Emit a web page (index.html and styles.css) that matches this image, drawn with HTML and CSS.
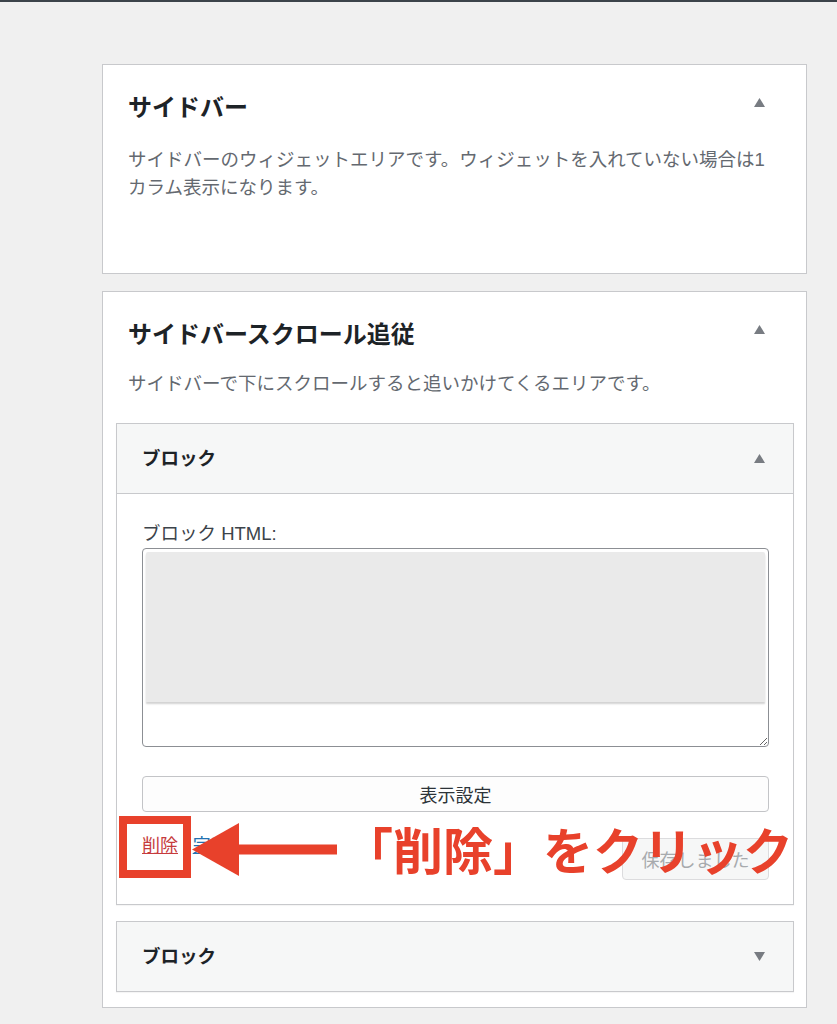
FILE: index.html
```html
<!DOCTYPE html>
<html lang="ja">
<head>
<meta charset="utf-8">
<title>ウィジェット</title>
<link rel="stylesheet" href="styles.css">
</head>
<body>
<div class="topbar"></div>
<main class="area">
  <section class="sidebar-box box-first">
    <div class="box-head">
      <h2 class="box-title">サイドバー</h2>
      <svg class="toggle" width="11" height="9" viewBox="0 0 11 9"><path d="M5.5 0 L11 9 L0 9 Z"/></svg>
    </div>
    <p class="desc desc-first">サイドバーのウィジェットエリアです。ウィジェットを入れていない場合は1<br>カラム表示になります。</p>
    <div class="dropzone"></div>
  </section>

  <section class="sidebar-box box-second">
    <div class="box-head">
      <h2 class="box-title">サイドバースクロール追従</h2>
      <svg class="toggle" width="11" height="9" viewBox="0 0 11 9"><path d="M5.5 0 L11 9 L0 9 Z"/></svg>
    </div>
    <p class="desc desc-second">サイドバーで下にスクロールすると追いかけてくるエリアです。</p>

    <div class="widget widget-open">
      <div class="widget-top">
        <h3 class="widget-title">ブロック</h3>
        <svg class="toggle-sm" width="11" height="9" viewBox="0 0 11 9"><path d="M5.5 0 L11 9 L0 9 Z"/></svg>
      </div>
      <div class="widget-inside">
        <label class="field-label">ブロック HTML:</label>
        <div class="field">
          <textarea class="code"></textarea>
          <div class="preview"></div>
        </div>
        <button class="display-btn" type="button">表示設定</button>
        <div class="actions">
          <span class="links"><a class="remove" href="#">削除</a> <span class="sep">|</span> <a class="done" href="#">完了</a></span>
          <button class="saved" type="button" disabled>保存しました</button>
          <div class="annotation">
            <div class="mark-box"></div>
            <svg class="arrow" width="145" height="54" viewBox="0 0 145 54"><path d="M0 26.5 L47 0 L47 53 Z"/><rect x="45" y="21.5" width="100" height="10"/></svg>
            <span class="note">「削除」をクリック</span>
          </div>
        </div>
      </div>
    </div>

    <div class="widget widget-closed">
      <div class="widget-top">
        <h3 class="widget-title">ブロック</h3>
        <svg class="toggle-sm" width="11" height="9" viewBox="0 0 11 9"><path d="M0 0 L11 0 L5.5 9 Z"/></svg>
      </div>
    </div>
  </section>
</main>
</body>
</html>
```

FILE: styles.css
```css
html, body {
  margin: 0;
  padding: 0;
}
body {
  background: #f0f0f0;
  font-family: "Liberation Sans", "Noto Sans CJK JP", sans-serif;
  color: #1d2327;
}
.topbar {
  height: 2px;
  background: #3c434a;
}
.area {
  margin-top: 62px;
  padding-left: 102px;
  width: 705px;
}
.sidebar-box {
  box-sizing: border-box;
  width: 705px;
  background: #fff;
  border: 1px solid #c8c9cc;
  padding: 28px 12px 0 13px;
}
.box-second {
  margin-top: 17px;
  padding-bottom: 15px;
}
.box-head {
  display: flex;
  justify-content: space-between;
  align-items: flex-start;
  padding: 0 29px 0 12px;
}
.box-title {
  margin: 0;
  font-size: 24px;
  line-height: 30px;
  font-weight: 700;
  color: #1d2327;
}
.toggle, .toggle-sm {
  fill: #787c82;
  display: block;
}
.toggle {
  margin-top: 5px;
}
.desc {
  margin: 0;
  padding: 0 12px;
  font-size: 18.5px;
  line-height: 28px;
  color: #646970;
}
.desc-first {
  margin-top: 23px;
}
.desc-second {
  margin-top: 20px;
}
.dropzone {
  height: 71px;
}
.widget {
  border: 1px solid #c8c9cc;
  background: #fff;
  box-shadow: 0 1px 1px rgba(0, 0, 0, 0.04);
}
.widget-open {
  margin-top: 25px;
}
.widget-closed {
  margin-top: 16px;
}
.widget-top {
  display: flex;
  justify-content: space-between;
  align-items: center;
  height: 69px;
  padding: 0 28px 0 25px;
  background: #f6f7f7;
}
.widget-open .widget-top {
  border-bottom: 1px solid #c8c9cc;
}
.widget-title {
  margin: 0;
  font-size: 18.5px;
  line-height: 24px;
  font-weight: 700;
  color: #1d2327;
}
.widget-inside {
  padding: 28px 24px 24px 25px;
}
.field-label {
  display: block;
  font-size: 18.5px;
  line-height: 24px;
  color: #3c434a;
}
.field {
  position: relative;
  margin-top: 2px;
}
.code {
  display: block;
  box-sizing: border-box;
  width: 627px;
  height: 199px;
  margin: 0;
  border: 1px solid #8c8f94;
  border-radius: 4px;
  background: #fff;
}
.preview {
  position: absolute;
  left: 4px;
  right: 4px;
  top: 4px;
  height: 150px;
  background: #eaeaea;
  border-radius: 2px 2px 0 0;
  box-shadow: 0 2px 2px rgba(0, 0, 0, 0.18);
}
.display-btn {
  display: block;
  box-sizing: border-box;
  width: 627px;
  height: 36px;
  margin-top: 29px;
  background: #fdfdfd;
  border: 1px solid #c3c4c7;
  border-radius: 4px;
  font-family: "Liberation Sans", "Noto Sans CJK JP", sans-serif;
  font-size: 18px;
  color: #2c3338;
}
.actions {
  position: relative;
  display: flex;
  justify-content: space-between;
  align-items: flex-start;
  margin-top: 22px;
  height: 46px;
}
.links {
  font-size: 18px;
  line-height: 24px;
  color: #a7aaad;
}
.remove {
  color: #c63b3d;
  text-decoration: underline;
}
.done {
  color: #2271b1;
  text-decoration: underline;
}
.saved {
  box-sizing: border-box;
  width: 147px;
  height: 42px;
  margin-top: 4px;
  background: #f6f7f7;
  border: 1px solid #dcdcde;
  border-radius: 4px;
  font-family: "Liberation Sans", "Noto Sans CJK JP", sans-serif;
  font-size: 18px;
  color: #a7aaad;
}
.annotation {
  position: absolute;
  left: 0;
  top: 0;
  width: 0;
  height: 0;
}
.mark-box {
  position: absolute;
  left: -23px;
  top: -18px;
  width: 72px;
  height: 62px;
  box-sizing: border-box;
  border: 8px solid #e8412b;
}
.arrow {
  position: absolute;
  left: 50px;
  top: -11px;
  fill: #e8412b;
}
.note {
  position: absolute;
  left: 201px;
  top: -16px;
  white-space: nowrap;
  font-family: "Noto Sans CJK JP", sans-serif;
  font-size: 50px;
  line-height: 60px;
  font-weight: 700;
  color: #e8412b;
}
```
